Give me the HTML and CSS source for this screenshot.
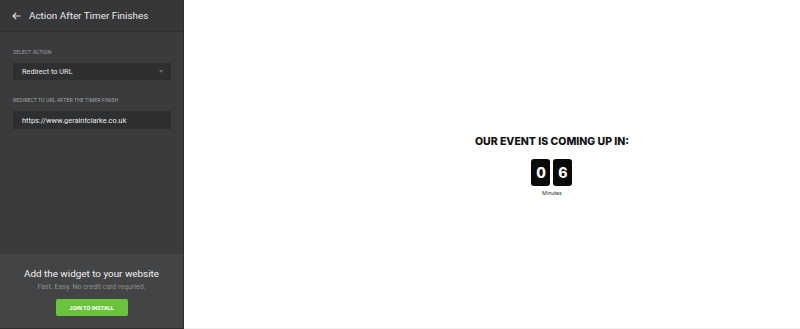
FILE: index.html
```html
<!DOCTYPE html>
<html>
<head>
<meta charset="utf-8">
<link rel="stylesheet" href="styles.css">
</head>
<body>
<div class="app">
  <aside class="sidebar">
    <header class="side-head">
      <svg class="back" width="9" height="8" viewBox="0 0 9 8"><path d="M8.5 4H1.2M4.2 0.8L1 4l3.2 3.2" fill="none" stroke="#e8e8e8" stroke-width="1.1"/></svg>
      <span class="side-title">Action After Timer Finishes</span>
    </header>
    <div class="side-body">
      <div class="field">
        <div class="label">SELECT ACTION</div>
        <div class="control select">
          <span>Redirect to URL</span>
          <span class="caret"></span>
        </div>
      </div>
      <div class="field">
        <div class="label">REDIRECT TO URL AFTER THE TIMER FINISH</div>
        <div class="control input">https://www.geraintclarke.co.uk</div>
      </div>
    </div>
    <div class="promo">
      <div class="promo-title">Add the widget to your website</div>
      <div class="promo-sub">Fast. Easy. No credit card requried.</div>
      <button class="join">JOIN TO INSTALL</button>
    </div>
  </aside>
  <main class="preview">
    <div class="timer">
      <h1 class="timer-title">OUR EVENT IS COMING UP IN:</h1>
      <div class="digits">
        <span class="digit">0</span>
        <span class="digit">6</span>
      </div>
      <div class="unit">Minutes</div>
    </div>
  </main>
</div>
</body>
</html>
```

FILE: styles.css
```css
* { box-sizing: border-box; }
html, body { margin: 0; padding: 0; height: 100%; }
body { font-family: Roboto, "Liberation Sans", sans-serif; background: #fff; }
.app { display: flex; height: 329px; }
.sidebar {
  width: 184px;
  flex: none;
  background: #3a3b3c;
  display: flex;
  flex-direction: column;
  border-right: 1px solid #2e2f30;
}
.side-head {
  height: 32px;
  display: flex;
  align-items: center;
  padding-left: 12px;
  background: #363738;
  border-bottom: 1px solid #2e2f30;
}
.back { margin-right: 8px; }
.side-title { color: #ececec; font-size: 9.9px; }
.side-body { flex: 1; padding: 17px 12px 0 13px; }
.field { margin-bottom: 17px; }
.label { color: #a3a4a5; font-size: 5.2px; line-height: 6px; letter-spacing: 0.05px; margin-bottom: 8px; }
.control {
  height: 17px;
  background: #2e2f30;
  color: #ebebeb;
  font-size: 7.4px;
  display: flex;
  align-items: center;
  padding-left: 9px;
  padding-right: 8px;
}
.input { height: 18px; }
.select { justify-content: space-between; }
.caret {
  width: 0; height: 0;
  border-left: 2.5px solid transparent;
  border-right: 2.5px solid transparent;
  border-top: 3px solid #6a6b6c;
}
.promo {
  height: 75px;
  background: #434445;
  display: flex;
  flex-direction: column;
  align-items: center;
  padding-top: 14px;
  border-bottom: 1px solid #2e2f30;
}
.promo-title { color: #f2f2f2; font-size: 9.9px; font-weight: 400; }
.promo-sub { color: #8f9091; font-size: 7px; margin-top: 4px; }
.join {
  margin-top: 8px;
  width: 72px;
  height: 17px;
  border: none;
  border-radius: 2px;
  background: #6ac33c;
  color: #fff;
  font-family: Roboto, sans-serif;
  font-weight: 700;
  font-size: 5.6px;
  padding: 0;
}
.preview {
  flex: 1;
  display: flex;
  align-items: center;
  justify-content: center;
  padding-left: 120px;
  border-bottom: 1px solid #f2f2f2;
}
.timer { display: flex; flex-direction: column; align-items: center; margin-top: 2px; }
.timer-title {
  margin: 0;
  font-family: Inter, "Liberation Sans", sans-serif;
  font-weight: 800;
  font-size: 10.5px;
  color: #111;
}
.digits { display: flex; gap: 3px; margin-top: 11px; }
.digit {
  width: 19px;
  height: 27px;
  background: #0a0a0a;
  border-radius: 3px;
  color: #fff;
  font-family: Inter, sans-serif;
  font-weight: 800;
  font-size: 14px;
  display: flex;
  align-items: center;
  justify-content: center;
}
.unit { font-size: 5.5px; color: #333; margin-top: 4px; }
```
